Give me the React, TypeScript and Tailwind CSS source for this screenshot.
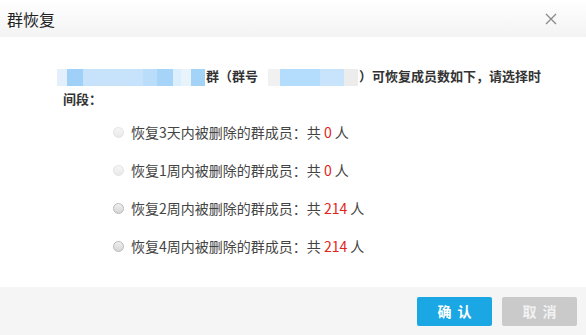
import React from "react";

const font = { fontFamily: '"Microsoft YaHei", "Noto Sans CJK SC", "Liberation Sans", sans-serif' };

const options = [
  { label: "恢复3天内被删除的群成员：共", count: 0, disabled: true },
  { label: "恢复1周内被删除的群成员：共", count: 0, disabled: true },
  { label: "恢复2周内被删除的群成员：共", count: 214, disabled: false },
  { label: "恢复4周内被删除的群成员：共", count: 214, disabled: false },
];

const Radio = ({ disabled }: { disabled: boolean }) => (
  <span
    className={
      disabled
        ? "inline-block w-[11px] h-[11px] rounded-full border border-[#e2e2e2] bg-gradient-to-b from-[#f6f6f6] to-[#e9e9e9] shrink-0"
        : "inline-block w-[11px] h-[11px] rounded-full border border-[#b9b9b9] bg-gradient-to-b from-[#f0f0f0] to-[#d6d6d6] shrink-0"
    }
  />
);

export default function App() {
  return (
    <div className="w-[586px] h-[335px] bg-white flex flex-col text-[#333]" style={font}>
      <div className="h-[37px] shrink-0 flex items-center justify-between pl-[7px] pr-[29px] bg-gradient-to-b from-white to-[#f3f3f3]">
        <span className="text-[16px] leading-none text-[#222]">群恢复</span>
        <svg width="12" height="12" viewBox="0 0 12 12" className="mt-[1px]">
          <path d="M1 1 L11 11 M11 1 L1 11" stroke="#8a8a8a" strokeWidth="1.3" />
        </svg>
      </div>

      <div className="flex-1 pt-[27px]">
        <p className="pl-[63px] pr-[40px] text-[13px] font-bold leading-[23px]">
          <span className="inline-flex align-middle -ml-[6px] mr-[1px] h-[17px] w-[148px]">
            <span className="w-[10px] bg-[#e3f0fb]" />
            <span className="w-[16px] bg-[#9fd0f8]" />
            <span className="w-[60px] bg-[#c6e3fb]" />
            <span className="w-[14px] bg-[#b9ddfb]" />
            <span className="w-[16px] bg-[#a6d4f8]" />
            <span className="w-[8px] bg-[#dbeefc]" />
            <span className="w-[10px] bg-[#e8f3fc]" />
            <span className="w-[14px] bg-[#a4d3f8]" />
          </span>
          群（群号
          <span className="inline-flex align-middle ml-[10px] mr-[1px] h-[17px] w-[90px]">
            <span className="w-[12px] bg-[#f1f1f1]" />
            <span className="w-[40px] bg-[#b4dcfc]" />
            <span className="w-[24px] bg-[#c7e4fc]" />
            <span className="w-[14px] bg-[#ececec]" />
          </span>
          ）可恢复成员数如下，请选择时间段：
        </p>

        <div className="mt-[3px] pl-[113px] flex flex-col">
          {options.map((o, i) => (
            <div key={i} className="h-[38px] flex items-center gap-[7px] text-[14px] text-[#444]">
              <Radio disabled={o.disabled} />
              <span>
                {o.label} <span className="text-[#e2231a]">{o.count}</span> 人
              </span>
            </div>
          ))}
        </div>
      </div>

      <div className="h-[48px] shrink-0 bg-[#f5f5f5] flex items-center justify-end gap-[10px] pr-[9px] pt-[1px]">
        <button className="w-[75px] h-[29px] rounded-[2px] bg-[#1ba7e4] text-white text-[14px] font-bold tracking-[6px] pl-[6px]">
          确认
        </button>
        <button className="w-[75px] h-[29px] rounded-[2px] bg-[#cacaca] text-[#f2f2f2] text-[14px] font-bold tracking-[6px] pl-[6px]">
          取消
        </button>
      </div>
    </div>
  );
}
